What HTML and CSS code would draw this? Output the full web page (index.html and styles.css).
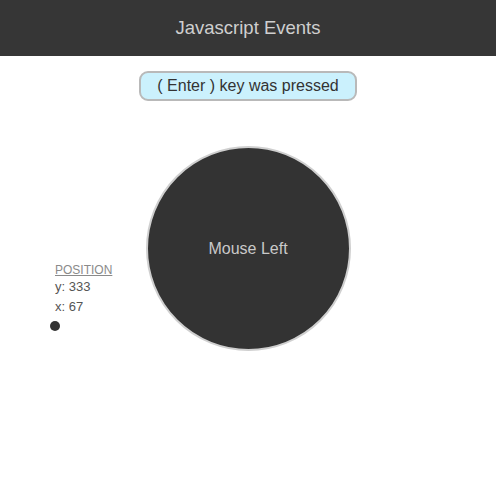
FILE: index.html
```html
<!DOCTYPE html>
<html lang="en">
  <head>
    <meta charset="UTF-8" />
    <meta name="viewport" content="width=device-width, initial-scale=1.0" />
    <title>Javascript Events</title>
    <link rel="stylesheet" href="styles.css">
  </head>
  <body>
    <header class="header">
      <h1>Javascript Events</h1>
    </header>

    <main class="stage">
      <div class="key-box">( Enter ) key was pressed</div>

      <div class="circle">
        <span>Mouse Left</span>
      </div>

      <div class="position">
        <h2>POSITION</h2>
        <p>y: 333</p>
        <p>x: 67</p>
      </div>

      <!-- follows the mouse -->
      <div class="dot" style="left: 50px; top: 265px"></div>
    </main>
  </body>
</html>
```

FILE: styles.css
```css
* {
  margin: 0;
  padding: 0;
  box-sizing: border-box;
  font-family: "Liberation Sans", Arial, sans-serif;
}

body {
  background-color: white;
}

.header {
  height: 56px;
  background-color: #363636;
  display: flex;
  align-items: center;
  justify-content: center;
}

.header h1 {
  color: #cfcfcf;
  font-size: 18.5px;
  font-weight: normal;
}

.stage {
  position: relative;
  display: flex;
  flex-direction: column;
  align-items: center;
  padding-top: 15px;
}

.key-box {
  width: 218px;
  height: 30px;
  display: flex;
  align-items: center;
  justify-content: center;
  background-color: #cbf1fd;
  border: 2px solid #b9b9b9;
  border-radius: 9px;
  color: #333;
  font-size: 16px;
}

.circle {
  width: 205px;
  height: 205px;
  margin-top: 45px;
  border-radius: 50%;
  background-color: #333;
  border: 2px solid #cfcfcf;
  display: flex;
  align-items: center;
  justify-content: center;
}

.circle span {
  color: #c9c9c9;
  font-size: 16px;
}

.position {
  position: absolute;
  left: 55px;
  top: 207px;
}

.position h2 {
  font-size: 12px;
  font-weight: normal;
  color: #8a8a8a;
  text-decoration: underline;
}

.position p {
  font-size: 13px;
  color: #555;
  line-height: 20px;
}

.dot {
  position: absolute;
  width: 10px;
  height: 10px;
  border-radius: 50%;
  background-color: #333;
}
```
